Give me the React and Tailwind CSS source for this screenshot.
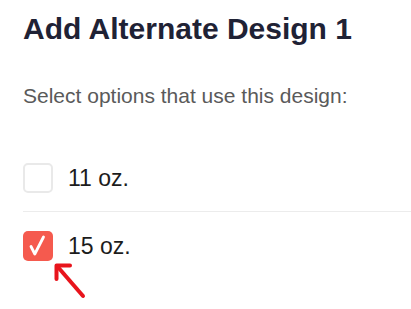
import React, { useState } from 'react';

const options = [
    { id: 'o11', label: '11 oz.', checked: false },
    { id: 'o15', label: '15 oz.', checked: true },
];

const Checkbox = ({ checked, onClick }) => {
    if (checked) {
        return (
            <button
                onClick={onClick}
                className="w-[30px] h-[30px] rounded-[5px] bg-[#f55a4e] flex items-center justify-center shrink-0"
            >
                <svg width="30" height="30" viewBox="0 0 30 30" fill="none">
                    <path d="M8 15.5 L11.8 23 L20.5 6" stroke="white" strokeWidth="2.8" strokeLinecap="round" strokeLinejoin="round" />
                </svg>
            </button>
        );
    }
    return (
        <button
            onClick={onClick}
            className="w-[30px] h-[30px] rounded-[5px] border-2 border-[#e9e9e9] bg-white shrink-0"
        />
    );
};

const App = () => {
    const [items, setItems] = useState(options);

    const toggle = (id) => {
        setItems(items.map(i => (i.id === id ? { ...i, checked: !i.checked } : i)));
    };

    return (
        <div className="relative w-[411px] h-[309px] bg-white overflow-hidden font-['Liberation_Sans',Arial,sans-serif]">
            <div className="pl-[23px] pt-[11px]">
                <h1 className="text-[30px] leading-[36px] font-bold text-[#1f2235]">
                    Add Alternate Design 1
                </h1>
                <p className="mt-[35px] text-[21px] leading-[28px] text-[#5a5a5a]">
                    Select options that use this design:
                </p>
                <div className="mt-[35px]">
                    {items.map((item, idx) => (
                        <div
                            key={item.id}
                            className={`flex items-center gap-[15px] h-[67px] ${idx === 0 ? 'border-b border-[#ececec]' : ''}`}
                        >
                            <Checkbox checked={item.checked} onClick={() => toggle(item.id)} />
                            <span className="text-[23px] leading-[30px] text-[#1c1c1c]">{item.label}</span>
                        </div>
                    ))}
                </div>
            </div>

            {/* annotation arrow */}
            <svg className="absolute left-[50px] top-[259px]" width="40" height="42" viewBox="0 0 40 42" fill="none">
                <path d="M7 7 L33 37" stroke="#e8141c" strokeWidth="4" strokeLinecap="round" />
                <path d="M6.5 20 L6.5 6.5 L20 6.5" stroke="#e8141c" strokeWidth="4" strokeLinecap="round" strokeLinejoin="round" />
            </svg>
        </div>
    );
};

export default App;
